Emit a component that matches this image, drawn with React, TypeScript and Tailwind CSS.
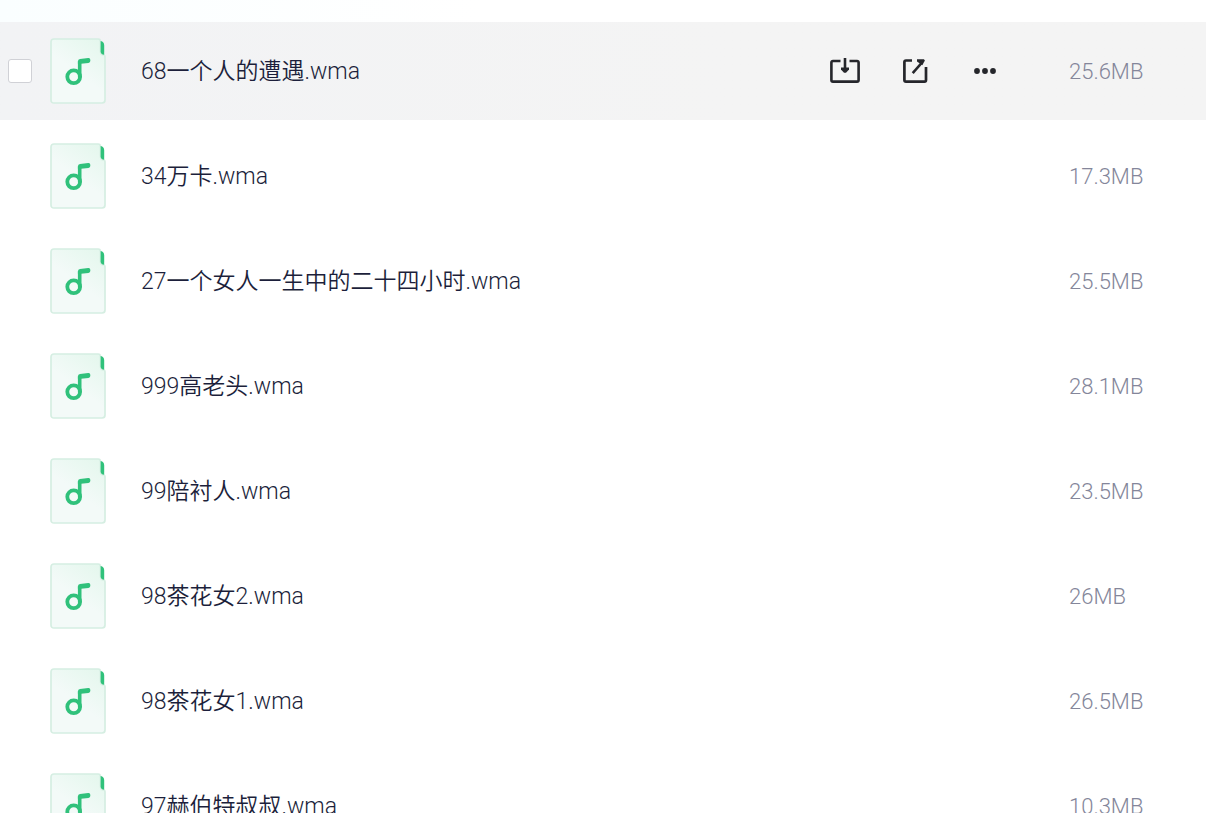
import React, { useState } from "react";

type AudioFile = { name: string; size: string };

const files: AudioFile[] = [
  { name: "68一个人的遭遇.wma", size: "25.6MB" },
  { name: "34万卡.wma", size: "17.3MB" },
  { name: "27一个女人一生中的二十四小时.wma", size: "25.5MB" },
  { name: "999高老头.wma", size: "28.1MB" },
  { name: "99陪衬人.wma", size: "23.5MB" },
  { name: "98茶花女2.wma", size: "26MB" },
  { name: "98茶花女1.wma", size: "26.5MB" },
  { name: "97赫伯特叔叔.wma", size: "10.3MB" },
];

function AudioIcon() {
  return (
    <svg className="shrink-0" width="56" height="66" viewBox="0 0 56 66" fill="none" aria-hidden="true">
      <defs>
        <linearGradient id="sheet" x1="50" y1="2" x2="26" y2="34" gradientUnits="userSpaceOnUse">
          <stop stopColor="#e4f7ed" />
          <stop offset="1" stopColor="#f3faf8" />
        </linearGradient>
      </defs>
      <path
        d="M4 1H48Q50.500 1 50.500 3.500V13Q50.500 17 53.500 17Q55 17 55 19V62Q55 65 52 65H4Q1 65 1 62V4Q1 1 4 1Z"
        fill="url(#sheet)"
        stroke="#d5eee2"
        strokeWidth="1.700"
      />
      <path d="M50.600 3C53 3.300 54.200 5 54.200 7.500V16.800C52 16.600 50.600 15.500 50.600 13.500Z" fill="#30c17b" />
      <circle cx="23.700" cy="38.800" r="6.400" stroke="#30c17b" strokeWidth="3.800" />
      <path d="M29.700 39.500V23.200" stroke="#30c17b" strokeWidth="3.600" />
      <path
        d="M27.900 23.500Q27.900 21.300 30 21L38.200 20.100Q40.300 19.900 40.300 21.700V23Q40.300 24.700 38.400 24.900L31 25.800H27.900Z"
        fill="#30c17b"
      />
    </svg>
  );
}

function DownloadIcon() {
  return (
    <svg width="30" height="26" viewBox="0 0 30 26" fill="none" aria-hidden="true">
      <path
        d="M10.500 3H3Q1.400 3 1.400 4.600V22Q1.400 23.600 3 23.600H27Q28.600 23.600 28.600 22V4.600Q28.600 3 27 3H19.500"
        stroke="#25262b"
        strokeWidth="2.600"
      />
      <path d="M15 0V11" stroke="#25262b" strokeWidth="2.600" />
      <path d="M11 9.500H19V11.500L16 14.800H14L11 11.500Z" fill="#25262b" />
    </svg>
  );
}

function ShareIcon() {
  return (
    <svg width="27" height="26" viewBox="0 0 27 26" fill="none" aria-hidden="true">
      <path
        d="M9 2.500H3Q1.400 2.500 1.400 4.100V22Q1.400 23.600 3 23.600H21.500Q23 23.600 23 22V9"
        stroke="#25262b"
        strokeWidth="2.700"
      />
      <path d="M9.700 15.200L19 4.500" stroke="#25262b" strokeWidth="2.600" />
      <path d="M14 1.200H20.900L21.900 2.400L19.300 7.200L14 3.400Z" fill="#25262b" />
    </svg>
  );
}

function MoreIcon() {
  return (
    <svg width="24" height="26" viewBox="0 0 24 26" fill="#25262b" aria-hidden="true">
      <circle cx="4" cy="13" r="2.900" />
      <circle cx="12" cy="13" r="2.900" />
      <circle cx="20" cy="13" r="2.900" />
    </svg>
  );
}

function FileRow({ file, active }: { file: AudioFile; active: boolean }) {
  const [checked, setChecked] = useState(false);
  return (
    <li className={`flex h-[98px] items-center pl-2 ${active ? "bg-[#f4f4f4] bg-linear-to-r from-[#f2f3f5] to-[#f4f4f4] to-60%" : ""}`}>
      <div className="flex w-[42px] shrink-0 items-center">
        {active && (
          <input
            type="checkbox"
            aria-label={file.name}
            checked={checked}
            onChange={(e) => setChecked(e.target.checked)}
            className="size-6 appearance-none rounded-[3px] border border-[#d0d1d6] bg-white checked:bg-[#30c17b]"
          />
        )}
      </div>
      <AudioIcon />
      <a href="#" className="ml-[35px] min-w-0 flex-1 truncate pt-0.5 text-[#1c1f3b]">
        {file.name}
      </a>
      {active && (
        <div className="mr-[72px] flex shrink-0 items-center gap-[43px]">
          <button type="button" aria-label="下载">
            <DownloadIcon />
          </button>
          <button type="button" aria-label="分享">
            <ShareIcon />
          </button>
          <button type="button" aria-label="更多">
            <MoreIcon />
          </button>
        </div>
      )}
      <span className="w-[137px] shrink-0 pt-0.5 text-[22px] text-[#84869a]">{file.size}</span>
    </li>
  );
}

export default function App() {
  return (
    <main className="h-screen overflow-hidden bg-white bg-linear-to-r from-[#fafeff] to-white to-40% pt-[22px] font-['Roboto','Noto_Sans_CJK_SC',sans-serif] text-[23px] leading-8 font-[350]">
      <ul className="flex flex-col gap-[7px] bg-white">
        {files.map((file, index) => (
          <FileRow key={file.name} file={file} active={index === 0} />
        ))}
      </ul>
    </main>
  );
}
